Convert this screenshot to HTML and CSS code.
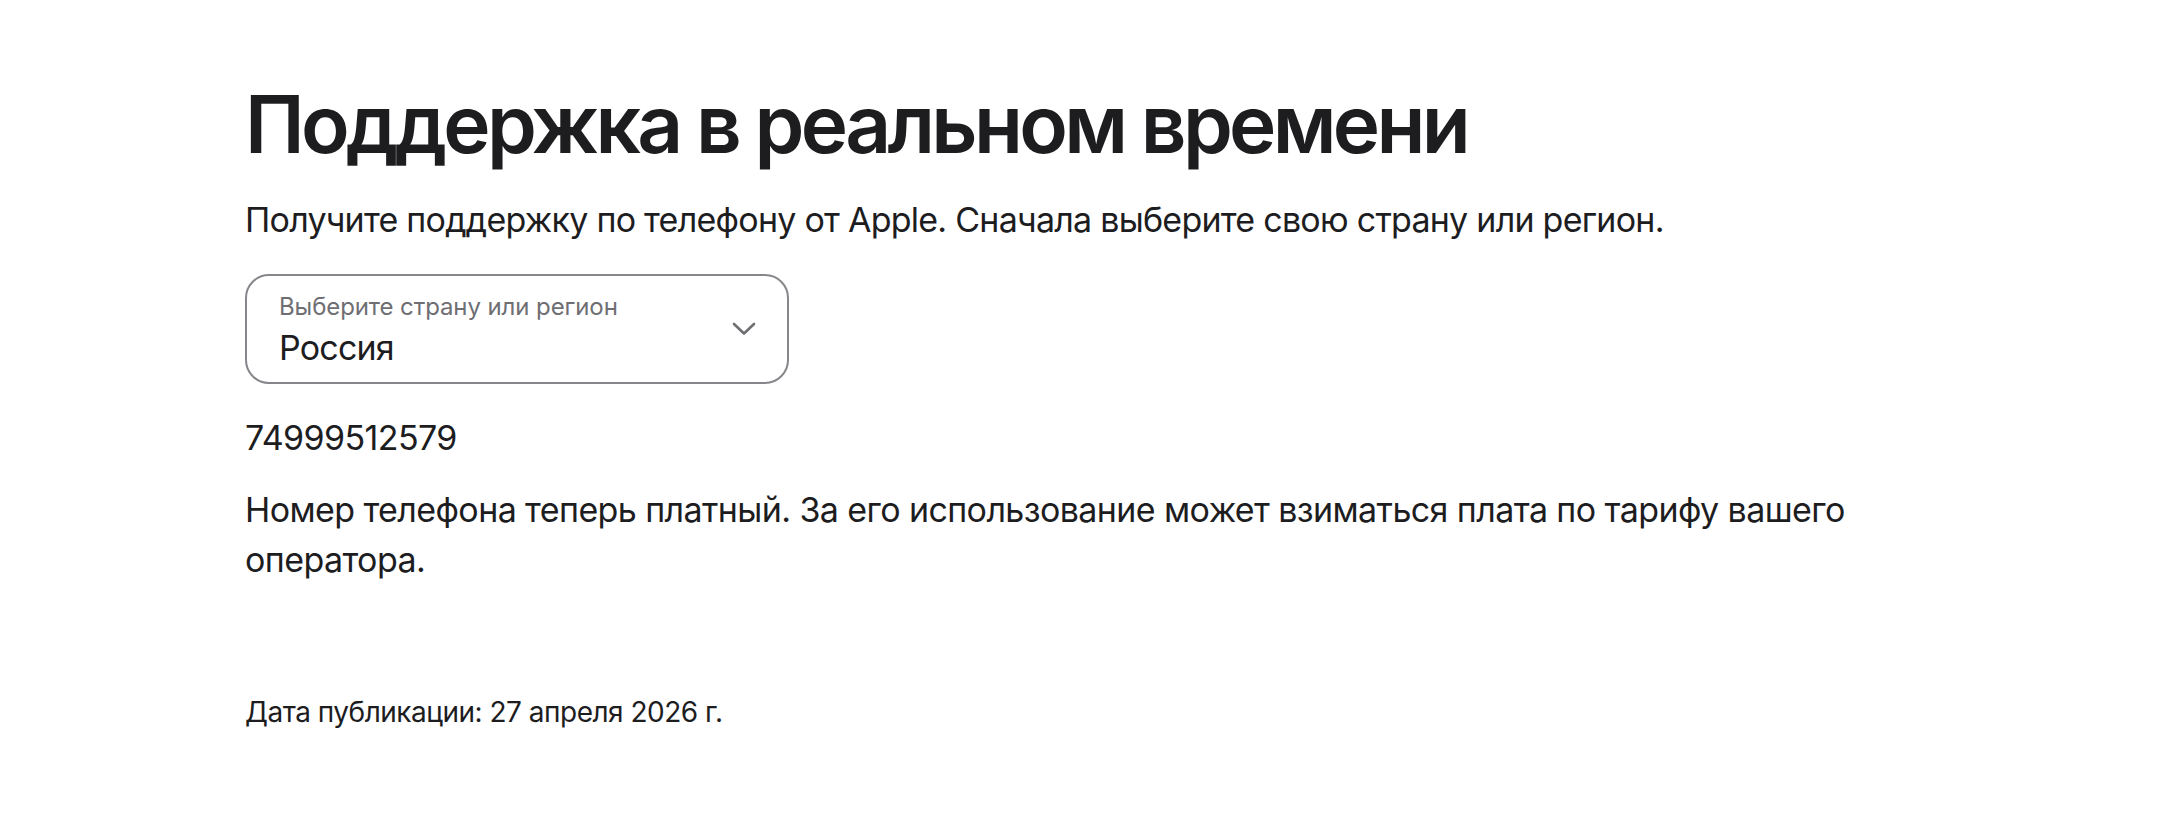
FILE: index.html
```html
<!DOCTYPE html>
<html lang="ru">
<head>
<meta charset="UTF-8">
<title>Поддержка в реальном времени</title>
<link rel="stylesheet" href="styles.css">
</head>

<body>

<main class="page">

    <h1 class="title">Поддержка в реальном времени</h1>
    <p class="lead">Получите поддержку по телефону от Apple. Сначала выберите свою страну или регион.</p>

    <!-- COUNTRY PICKER -->
    <div class="country-select">
        <div class="country-text">
            <span class="country-label">Выберите страну или регион</span>
            <span class="country-value">Россия</span>
        </div>
        <svg class="chevron" width="24" height="14" viewBox="0 0 24 14">
            <path d="M2 2 L12 11.5 L22 2"/>
        </svg>
    </div>

    <p class="phone">74999512579</p>
    <p class="note">Номер телефона теперь платный. За его использование может взиматься плата по тарифу вашего оператора.</p>

    <p class="published">Дата публикации: 27 апреля 2026 г.</p>

</main>

</body>
</html>
```

FILE: styles.css
```css
body {
    margin: 0;
    font-family: Inter, "Noto Sans", sans-serif;
    color: #1d1d1f;
    background: #fff;
}

.page {
    padding: 80px 0 0 245px;
    max-width: 1620px;
}

.title {
    font-size: 80px;
    font-weight: 600;
    line-height: 88px;
    letter-spacing: -3.7px;
    margin: 0;
}

.lead {
    font-size: 34px;
    line-height: 50px;
    letter-spacing: -0.75px;
    margin: 27px 0 0;
}

/* COUNTRY PICKER */
.country-select {
    width: 544px;
    height: 110px;
    box-sizing: border-box;
    margin-top: 29px;
    padding: 0 31px 0 32px;
    border: 2px solid #86868b;
    border-radius: 24px;
    display: flex;
    align-items: center;
    justify-content: space-between;
}

.country-text {
    display: flex;
    flex-direction: column;
    margin-top: 3px;
}

.country-label {
    font-size: 24px;
    line-height: 28px;
    letter-spacing: -0.1px;
    color: #6e6e73;
}

.country-value {
    font-size: 34px;
    line-height: 40px;
    letter-spacing: -0.8px;
    margin-top: 7px;
}

.chevron path {
    fill: none;
    stroke: #6e6e73;
    stroke-width: 2.6;
    stroke-linecap: round;
    stroke-linejoin: round;
}

.phone {
    font-size: 34px;
    line-height: 50px;
    letter-spacing: -0.6px;
    margin: 29px 0 0;
}

.note {
    font-size: 34px;
    line-height: 50px;
    letter-spacing: -0.6px;
    margin: 22px 0 0;
}

.published {
    font-size: 28px;
    line-height: 40px;
    letter-spacing: -0.5px;
    margin: 107px 0 0;
}
```
